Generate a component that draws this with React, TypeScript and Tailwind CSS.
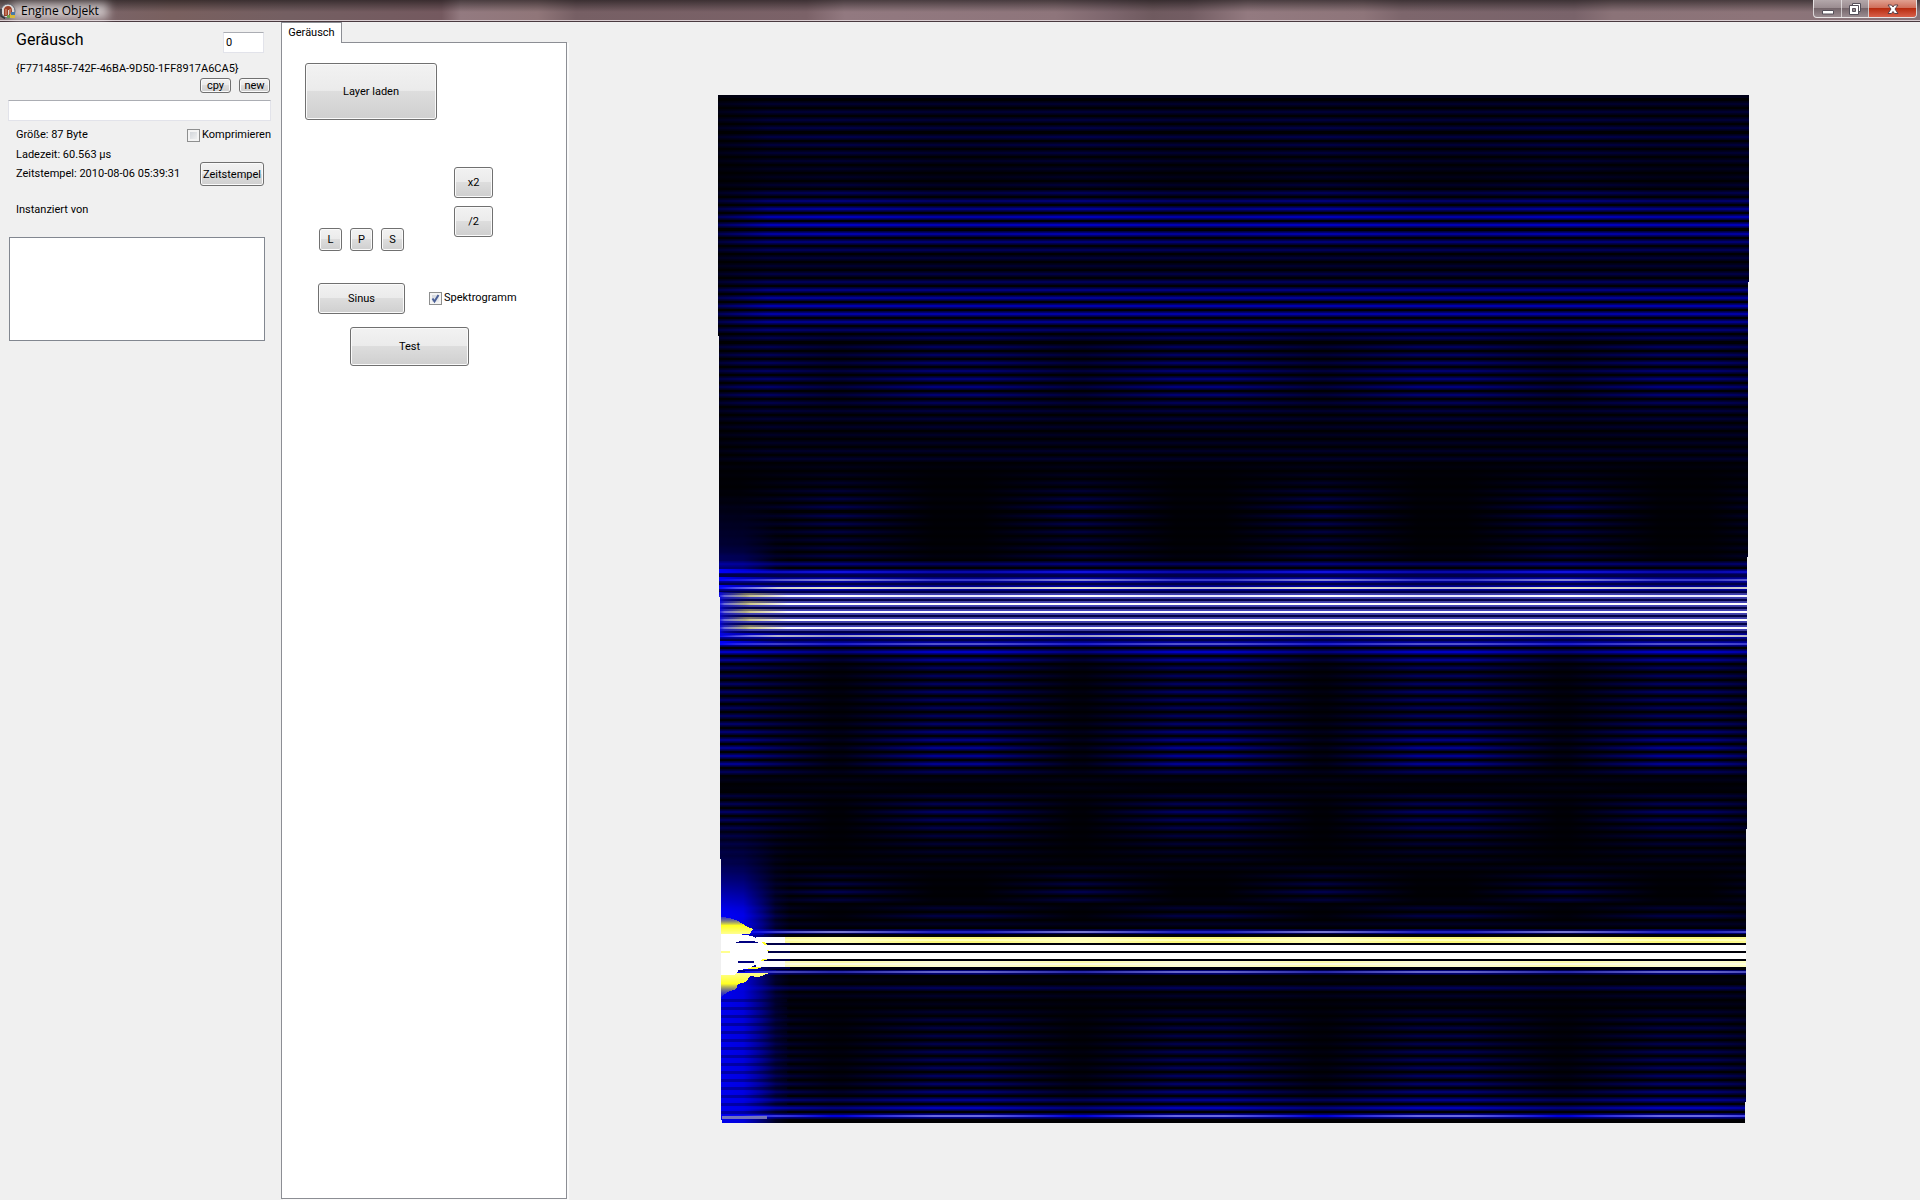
import React, { useState } from 'react';
import { clsx } from 'clsx';

type Level = [y: number, node: number, antinode: number];

// Blue level of the spectrogram by height, at the nodes and antinodes of the beat
const LEVELS: Level[] = [
    [95, 20, 20], [104, 45, 42], [136, 75, 62], [175, 32, 20], [184, 50, 32], [193, 85, 65],
    [200, 115, 95], [209, 155, 130], [217, 185, 165], [225, 190, 175], [234, 170, 150],
    [242, 115, 110], [258, 55, 55], [266, 45, 45], [282, 85, 85], [290, 125, 125],
    [298, 150, 150], [306, 170, 170], [314, 160, 165], [322, 135, 140], [330, 95, 115],
    [338, 60, 85], [346, 50, 90], [362, 55, 100], [386, 65, 125], [395, 55, 110],
    [410, 42, 60], [440, 30, 32], [458, 45, 40], [467, 22, 12], [480, 35, 6],
    [507, 75, 10], [520, 75, 6], [540, 50, 6], [556, 65, 14], [564, 120, 90],
    [572, 225, 180], [645, 190, 210], [653, 110, 190], [661, 40, 130], [669, 20, 85],
    [690, 16, 95], [710, 16, 85], [730, 26, 105], [750, 28, 145], [765, 26, 140],
    [773, 24, 75], [781, 20, 15], [789, 15, 8], [797, 20, 60], [812, 8, 95],
    [820, 8, 85], [840, 8, 50], [860, 10, 28], [876, 45, 10], [892, 75, 6],
    [900, 55, 10], [908, 12, 45], [916, 12, 65], [924, 24, 35], [932, 120, 200],
    [972, 120, 180], [980, 20, 14], [988, 65, 85], [996, 25, 40], [1004, 12, 25],
    [1020, 14, 60], [1050, 14, 75], [1080, 22, 95], [1092, 40, 110], [1100, 85, 140],
    [1108, 125, 185], [1123, 200, 230],
];

const ROW_COUNT = 127;

// Rows whose peak is brighter than plain blue: [node colour, antinode colour]
const PEAKS: Record<number, [string, string]> = {
    58: ['#1010dc', '#0808a8'],
    59: ['#8484d0', '#3838c8'],
    60: ['#e4e4c8', '#bcbcd0'],
    61: ['#ffffff', '#e8e8ff'],
    62: ['#ffffff', '#ffffff'],
    63: ['#fffcff', '#fffcff'],
    64: ['#ffffff', '#ffffff'],
    65: ['#f4f4ff', '#ffffff'],
    66: ['#9c9cc4', '#c8c8cc'],
    67: ['#1c1cc8', '#5050d0'],
    103: ['#7878d0', '#2020b8'],
    108: ['#2828a8', '#6464c8'],
    126: ['#0000d8', '#6868e0'],
};

// Saturated rows of the base tone
const BARS = [
    { y: 937, colors: ['#ffffb4', '#fbf878'], core: '#ffffb8' },
    { y: 945, colors: ['#ffffff', '#ffffff'], core: '#ffffff' },
    { y: 953, colors: ['#ffffff', '#ffffff'], core: '#ffffff' },
    { y: 961, colors: ['#ffffa8', '#ffffd0'], core: '#ffffe0' },
];

const rowY = (n: number) =>
    104 + n * 8 + (n >= 4 ? 1 : 0) + (n >= 16 ? 1 : 0) + (n >= 30 ? 1 : 0) + (n >= 51 ? 1 : 0);

const levelsAt = (y: number) => {
    const i = Math.max(1, LEVELS.findIndex((l) => l[0] >= y));
    const [y0, a0, b0] = LEVELS[i - 1];
    const [y1, a1, b1] = LEVELS[i];
    const t = (y - y0) / (y1 - y0);
    return [Math.round(a0 + (a1 - a0) * t), Math.round(b0 + (b1 - b0) * t)];
};

const Beat = ({ id, from, to }: { id: string; from: string; to: string }) => (
    <linearGradient id={id} gradientUnits="userSpaceOnUse" x1="837" y1="0" x2="958" y2="0" spreadMethod="reflect">
        <stop offset="0.05" stopColor={from} />
        <stop offset="0.8" stopColor={to} />
    </linearGradient>
);

const Spectrogram = () => {
    const rows = Array.from({ length: ROW_COUNT }, (_, n) => {
        const y = rowY(n);
        const [a, b] = levelsAt(y);
        return { n, y, from: `rgb(0,0,${a})`, to: `rgb(0,0,${b})`, peak: PEAKS[n] };
    }).filter((r) => r.n < 104 || r.n > 107);

    return (
        <svg viewBox="718 95 1031 1028" className="w-[1031px] max-w-full" role="img" aria-label="Spektrogramm">
            <defs>
                <clipPath id="outline">
                    <path d="M718 95H1749V282H1748V557H1747V829H1746V1102H1745V1123H722V1120H721V859H720V597H719V336H718Z" />
                </clipPath>
                {rows.map((r) => (
                    <React.Fragment key={r.n}>
                        <Beat id={`row${r.n}`} from={r.from} to={r.to} />
                        {r.peak && <Beat id={`peak${r.n}`} from={r.peak[0]} to={r.peak[1]} />}
                    </React.Fragment>
                ))}
                {BARS.map((b) => (
                    <Beat key={b.y} id={`bar${b.y}`} from={b.colors[0]} to={b.colors[1]} />
                ))}
                <linearGradient id="attack">
                    <stop offset="0" stopColor="#000" stopOpacity="0.5" />
                    <stop offset="1" stopColor="#000" stopOpacity="0" />
                </linearGradient>
                <linearGradient id="onset">
                    <stop offset="0" stopColor="#0000f0" />
                    <stop offset="0.2" stopColor="#0808c8" stopOpacity="0.6" />
                    <stop offset="1" stopColor="#000080" stopOpacity="0" />
                </linearGradient>
                <linearGradient id="onsetRow">
                    <stop offset="0" stopColor="#0000ff" />
                    <stop offset="0.3" stopColor="#0000ff" stopOpacity="0.6" />
                    <stop offset="1" stopColor="#0000ff" stopOpacity="0" />
                </linearGradient>
                <linearGradient id="warm">
                    <stop offset="0" stopColor="#b0b000" stopOpacity="0" />
                    <stop offset="0.35" stopColor="#a8a030" stopOpacity="0.6" />
                    <stop offset="1" stopColor="#a09020" stopOpacity="0" />
                </linearGradient>
                <linearGradient id="glow" x2="0" y2="1">
                    <stop offset="0" stopColor="#000060" stopOpacity="0" />
                    <stop offset="0.35" stopColor="#000060" stopOpacity="0.7" />
                    <stop offset="0.62" stopColor="#0000a8" />
                    <stop offset="0.8" stopColor="#0000f8" />
                    <stop offset="1" stopColor="#0000ff" />
                </linearGradient>
                <linearGradient id="glowLow" x2="0" y2="1">
                    <stop offset="0" stopColor="#0000ff" stopOpacity="0" />
                    <stop offset="0.7" stopColor="#0000ff" stopOpacity="0.2" />
                    <stop offset="1" stopColor="#0000ff" stopOpacity="0.5" />
                </linearGradient>
                <linearGradient id="fade">
                    <stop offset="0" stopColor="#fff" />
                    <stop offset="0.35" stopColor="#e8e8e8" />
                    <stop offset="0.62" stopColor="#777" />
                    <stop offset="0.8" stopColor="#222" />
                    <stop offset="1" stopColor="#000" />
                </linearGradient>
                <mask id="fadeRight">
                    <rect x="718" y="430" width="72" height="700" fill="url(#fade)" />
                </mask>
                <linearGradient id="yellowTop" x2="0" y2="1">
                    <stop offset="0" stopColor="#808080" stopOpacity="0.4" />
                    <stop offset="0.5" stopColor="#ffff20" />
                    <stop offset="1" stopColor="#ffff90" />
                </linearGradient>
                <linearGradient id="yellowBottom" x2="0" y2="1">
                    <stop offset="0" stopColor="#ffff90" />
                    <stop offset="0.45" stopColor="#ffff20" />
                    <stop offset="1" stopColor="#707080" stopOpacity="0.2" />
                </linearGradient>
            </defs>

            <g clipPath="url(#outline)" shapeRendering="crispEdges">
                <rect x="718" y="95" width="1031" height="1028" fill="#000003" />
                <rect x="718" y="95" width="1031" height="3" fill="#000018" />
                <rect x="718" y="575" width="1031" height="70" fill="#000048" />

                {rows.map((r) => (
                    <g key={r.n} fill={`url(#row${r.n})`}>
                        <rect x="718" y={r.y - 3} width="1031" height="6" opacity="0.4" />
                        <rect x="718" y={r.y - 2} width="1031" height="4" opacity="0.4" />
                        <rect x="718" y={r.y - 1} width="1031" height="2" />
                    </g>
                ))}
                <rect x="718" y="95" width="50" height="370" fill="url(#attack)" />

                {/* Overtone */}
                {rows.filter((r) => r.peak).map((r) => (
                    <g key={r.n} fill={`url(#peak${r.n})`}>
                        {r.n > 60 && r.n < 66 && <rect x="718" y={r.y - 3} width="1031" height="6" opacity="0.25" />}
                        <rect x="718" y={r.y - 1} width="1031" height="2" />
                    </g>
                ))}
                {[61, 62, 63, 64, 65].map((n) => (
                    <rect key={n} x="722" y={rowY(n) - 3} width="66" height="4" fill="url(#warm)" />
                ))}
                {[58, 59, 60, 66, 67].map((n) => (
                    <rect key={n} x="718" y={rowY(n) - 3} width="60" height="4" fill="url(#onsetRow)" />
                ))}
                <rect x="718" y="592" width="32" height="44" fill="url(#onset)" />
                <rect x="718" y="490" width="72" height="82" fill="url(#glowLow)" mask="url(#fadeRight)" />

                {/* Base tone */}
                <rect x="764" y="934" width="985" height="36" fill="#000008" />
                <g mask="url(#fadeRight)">
                    <rect x="718" y="820" width="72" height="115" fill="url(#glow)" />
                    <rect x="718" y="935" width="72" height="188" fill="#0000f0" />
                </g>
                {rows.filter((r) => r.n > 111).map((r) => (
                    <rect key={r.n} x="721" y={r.y - 5} width="66" height="3" fill="#000030" opacity="0.35" />
                ))}
                {BARS.map((b) => (
                    <g key={b.y}>
                        <rect x="756" y={b.y} width="993" height="6" fill={`url(#bar${b.y})`} />
                        <rect x="756" y={b.y + 2} width="993" height="2" fill={b.core} />
                        <rect x="756" y={b.y} width="29" height="6" fill="#fff" />
                        <rect x="768" y={b.y + 6} width="22" height="2" fill="#000048" />
                    </g>
                ))}
                <path d="M721 917L730 918L738 921L746 926L753 929L750 934H721Z" fill="url(#yellowTop)" />
                <path d="M721 973H770L758 977L750 976L746 982L738 984L736 989L728 992L721 997Z" fill="url(#yellowBottom)" />
                <path d="M758 942H764L768 945H758Z" fill="#ffff30" />
                <path d="M762 950H770L764 954H758Z" fill="#ffff30" />
                <path d="M758 959H768L762 961H754Z" fill="#ffff30" />
                <path d="M750 967H762L756 969H746Z" fill="#ffff30" />
                <path d="M721 934H738L752 936L760 940L765 946L768 952L764 957L758 963L750 968L740 970L734 975H721Z" fill="#fff" />
                <path d="M736 942L742 941H752L758 942V943H736Z" fill="#000080" />
                <path d="M738 961H754V963H738Z" fill="#000080" />
                <path d="M738 970H776V971H752L738 972Z" fill="#000090" />
                <path d="M721 951H730V953H721Z" fill="#ffff90" />
                <rect x="722" y="1116" width="45" height="3" fill="#8080b8" opacity="0.9" />
            </g>
        </svg>
    );
};

const PushButton = ({ className, ...props }: React.ButtonHTMLAttributes<HTMLButtonElement>) => (
    <button
        type="button"
        className={clsx(
            'flex shrink-0 items-center justify-center rounded-[3px] border border-[#707070] leading-none whitespace-nowrap',
            'bg-[linear-gradient(#f2f2f2,#ebebeb_48%,#dddddd_50%,#cfcfcf)] shadow-[inset_0_0_0_1px_#fafafa]',
            className,
        )}
        {...props}
    />
);

const CheckBox = ({ label, ...props }: { label: string } & React.InputHTMLAttributes<HTMLInputElement>) => (
    <label className="flex items-center gap-[2px] whitespace-nowrap">
        <span className="relative block size-[13px]">
            <input
                type="checkbox"
                className="peer block size-[13px] appearance-none border border-[#8e8f8f] bg-[linear-gradient(135deg,#cbcfd5,#f6f6f6)] shadow-[inset_0_0_0_2px_#f4f4f4]"
                {...props}
            />
            <svg viewBox="0 0 13 13" className="pointer-events-none absolute inset-0 hidden peer-checked:block">
                <path d="M3.5 6.5L5.5 9.5L9.5 3" fill="none" stroke="#4a5f97" strokeWidth="2" />
            </svg>
        </span>
        {label}
    </label>
);

const AppIcon = () => (
    <svg viewBox="0 0 16 16" className="relative size-4">
        <circle cx="8" cy="8" r="7" fill="#dcd8d6" stroke="#5d6470" />
        <path d="M4 13V6Q5 3 8 3Q12 3 12 8V12H9V7H8V13Z" fill="#9c4028" />
        <path d="M6 12V6M10 11V6" stroke="#e0a488" />
        <path d="M1 6V13L5 15.500" fill="none" stroke="#30343c" strokeWidth="1.5" />
        <path d="M10 11H15V15H10Z" fill="#d8b838" />
        <path d="M11 9H15V12H11Z" fill="#4878a8" />
        <path d="M7 12H10V15H7Z" fill="#6c9c4c" />
    </svg>
);

const captionButton = 'flex h-full items-center justify-center border-r border-white/60';

const TitleBar = () => (
    <header className="relative flex h-[22px] shrink-0 items-start border-b border-[#4a3a40] bg-[linear-gradient(90deg,#8c7a7c_0%,#7a6468_5%,#79605f_9%,#745f62_15%,#74595f_23%,#937a80_24%,#907679_28%,#765f64_30%,#7b6268_42%,#927980_44%,#8e757b_55%,#7c656c_58%,#6f5a5f_60%,#735d63_62%,#937a80_65%,#8e757a_71%,#7d666c_73%,#79636a_82%,#8b7378_84%,#8d7479_92%,#86747a_100%)]">
        <div className="absolute inset-0 border-b border-[#d8ccd0] bg-linear-to-b from-black/50 via-transparent via-60% to-transparent" />
        <div className="relative flex h-[22px] items-center gap-[5px] pr-6">
            <div className="absolute inset-y-[3px] left-3 w-24 bg-white/60 blur-[5px]" />
            <AppIcon />
            <h1 className="relative font-['Open_Sans',sans-serif] text-[12px] leading-5 text-black">Engine Objekt</h1>
        </div>
        <div className="relative mr-[3px] ml-auto flex h-[18px] overflow-hidden rounded-b-[4px] border border-t-0 border-white/70 bg-[linear-gradient(#b3a7aa,#9b8d91_45%,#75666b_50%,#9a8c91)]">
            <button type="button" aria-label="Minimieren" className={clsx(captionButton, 'w-[28px]')}>
                <svg viewBox="0 0 12 12" className="size-3">
                    <path d="M0.500 7.500H11.500V11H0.500Z" fill="#fff" stroke="#55505a" />
                </svg>
            </button>
            <button type="button" aria-label="Wiederherstellen" className={clsx(captionButton, 'w-[27px]')}>
                <svg viewBox="0 0 12 12" className="size-3">
                    <path d="M3.500 0.500H11.500V8.500H3.500Z" fill="#fff" stroke="#55505a" />
                    <path d="M0.500 2.500H9.500V11.500H0.500Z" fill="#fff" stroke="#55505a" />
                    <path d="M3.500 5.500H6.500V8.500H3.500Z" fill="#9a8c91" stroke="#55505a" />
                </svg>
            </button>
            <button
                type="button"
                aria-label="Schließen"
                className="flex h-full w-[47px] items-center justify-center bg-[linear-gradient(#e0a090,#d0705c_45%,#b82c10_50%,#d8604a)]"
            >
                <svg viewBox="0 0 12 12" className="size-3">
                    <path
                        d="M1 2H4.500L6 4L7.500 2H11L8 6L11 10.500H7.500L6 8.500L4.500 10.500H1L4 6Z"
                        fill="#fff"
                        stroke="#5a4048"
                    />
                </svg>
            </button>
        </div>
    </header>
);

const ObjectPanel = () => (
    <aside className="w-[281px] shrink-0 pt-1">
        <div className="flex items-start justify-between pr-[17px] pl-4">
            <h2 className="text-[16px] leading-7">Geräusch</h2>
            <input
                aria-label="Index"
                defaultValue="0"
                className="mt-[6px] h-[21px] w-[41px] border border-t-[#abadb3] border-[#e2e3ea] bg-white px-[2px]"
            />
        </div>
        <p className="mt-[7px] pl-4 leading-4">{'{F771485F-742F-46BA-9D50-1FF8917A6CA5}'}</p>
        <div className="mt-px flex justify-end gap-2 pr-[11px]">
            <PushButton className="h-[15px] w-[31px]">cpy</PushButton>
            <PushButton className="h-[15px] w-[31px]">new</PushButton>
        </div>
        <input
            aria-label="Name"
            className="mt-[7px] ml-2 block h-[21px] w-[263px] border border-t-[#abadb3] border-[#e2e3ea] bg-white px-1"
        />
        <div className="mt-[5px] flex h-[19px] items-center justify-between pr-[10px] pl-4">
            <span>Größe: 87 Byte</span>
            <CheckBox label="Komprimieren" />
        </div>
        <div className="flex justify-between pr-[17px] pl-4 leading-[19px]">
            <div>
                <p>Ladezeit: 60.563 µs</p>
                <p>Zeitstempel: 2010-08-06 05:39:31</p>
            </div>
            <PushButton className="mt-[17px] h-6 w-16">Zeitstempel</PushButton>
        </div>
        <h3 className="mt-4 pl-4 leading-4" id="instances">Instanziert von</h3>
        <ul aria-labelledby="instances" className="mt-[19px] ml-[9px] h-[104px] w-[256px] border border-[#828790] bg-white" />
    </aside>
);

const SoundTab = () => {
    const [spectrogram, setSpectrogram] = useState(true);

    return (
        <section className="flex w-[286px] shrink-0 flex-col pb-px">
            <div role="tablist" className="flex">
                <button
                    type="button"
                    role="tab"
                    aria-selected="true"
                    className="z-10 -mb-px h-[21px] w-[61px] border border-b-0 border-[#8c8e94] bg-white pb-[2px] leading-none"
                >
                    Geräusch
                </button>
            </div>
            <div role="tabpanel" className="grow border border-[#8c8e94] bg-white pt-5 shadow-[2px_1px_0_#fafafa]">
                <PushButton className="ml-[23px] h-[57px] w-[132px]">Layer laden</PushButton>
                <div className="mt-[47px] ml-[37px] flex">
                    <div className="flex gap-2 self-end">
                        <PushButton className="size-[23px]">L</PushButton>
                        <PushButton className="size-[23px]">P</PushButton>
                        <PushButton className="size-[23px]">S</PushButton>
                    </div>
                    <div className="mb-[14px] ml-[50px] flex flex-col gap-2">
                        <PushButton className="h-[31px] w-[39px]">x2</PushButton>
                        <PushButton className="h-[31px] w-[39px]">/2</PushButton>
                    </div>
                </div>
                <div className="mt-8 ml-9 flex items-center gap-6">
                    <PushButton className="h-[31px] w-[87px]">Sinus</PushButton>
                    <CheckBox
                        label="Spektrogramm"
                        checked={spectrogram}
                        onChange={(e) => setSpectrogram(e.target.checked)}
                    />
                </div>
                <PushButton className="mt-[13px] ml-[68px] h-[39px] w-[119px]">Test</PushButton>
            </div>
        </section>
    );
};

const App = () => (
    <div className="flex min-h-screen flex-col bg-[#f0f0f0] font-['Roboto','Liberation_Sans',sans-serif] text-[11px] text-black">
        <TitleBar />
        <div className="flex grow">
            <ObjectPanel />
            <SoundTab />
            <main className="flex min-w-0 grow items-center justify-center pr-5 pb-1">
                <Spectrogram />
            </main>
        </div>
    </div>
);

export default App;
